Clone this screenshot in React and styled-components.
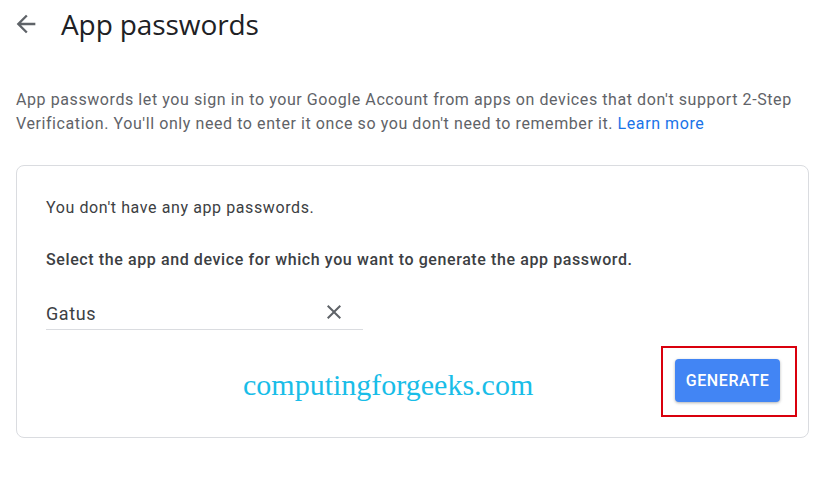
import styled, { createGlobalStyle } from "styled-components";

const GlobalStyle = createGlobalStyle`
    body {
        margin: 0;
        background: #ffffff;
        font-family: Roboto, "Liberation Sans", Arial, sans-serif;
    }
`;

const Page = styled.div`
    width: 830px;
    height: 486px;
    padding: 0 21px 0 16px;
    box-sizing: border-box;
    overflow: hidden;
`;

const Header = styled.div`
    display: flex;
    align-items: center;
    height: 48px;
    margin-left: -4px;
`;

const BackButton = styled.button`
    display: flex;
    align-items: center;
    justify-content: center;
    width: 28px;
    height: 28px;
    padding: 0;
    border: none;
    background: none;
    color: #5f6368;
    margin-right: 21px;
    margin-top: -1px;
`;

const Title = styled.h1`
    margin: 0;
    font-family: "Open Sans", Roboto, sans-serif;
    font-size: 28px;
    font-weight: 400;
    color: #202124;
    letter-spacing: -0.1px;
`;

const Description = styled.p`
    margin: 40px 0 29px;
    font-size: 16px;
    line-height: 24px;
    letter-spacing: 0.58px;
    color: #5f6368;
`;

const Link = styled.a`
    color: #1a73e8;
    text-decoration: none;
`;

const Card = styled.section`
    border: 1px solid #dadce0;
    border-radius: 8px;
    height: 273px;
    box-sizing: border-box;
    padding: 30px 29px 0;
`;

const Text = styled.p`
    margin: 0 0 ${(p) => p.$gap}px;
    font-size: 16px;
    line-height: 24px;
    letter-spacing: 0.6px;
    color: #3c4043;
    font-weight: ${(p) => (p.$bold ? 500 : 400)};
`;

const Field = styled.div`
    display: flex;
    align-items: center;
    justify-content: space-between;
    width: 317px;
    height: 34px;
    border-bottom: 1px solid #dadce0;
`;

const FieldValue = styled.span`
    font-size: 18px;
    letter-spacing: 0.6px;
    color: #3c4043;
    padding-top: 3px;
`;

const ClearIcon = styled.svg`
    width: 24px;
    height: 24px;
    margin-right: 17px;
    fill: #5f6368;
`;

const Footer = styled.div`
    display: flex;
    align-items: center;
    margin-top: 16px;
`;

const Watermark = styled.span`
    flex: 1;
    padding-left: 197px;
    font-family: "Liberation Serif", "Times New Roman", serif;
    font-size: 30px;
    color: #19bde8;
    margin-top: 6px;
`;

const Highlight = styled.div`
    border: 2px solid #d9000d;
    padding: 11px 15px 13px 12px;
    margin-right: -18px;
`;

const Button = styled.button`
    height: 43px;
    width: 105px;
    padding: 0;
    border: none;
    border-radius: 4px;
    background: #4285f4;
    color: #ffffff;
    font-family: Roboto, sans-serif;
    font-size: 16px;
    font-weight: 500;
    letter-spacing: 0.6px;
    box-shadow: 0 1px 3px rgba(60, 64, 67, 0.4);
`;

export default function App() {
    return (
        <Page>
            <GlobalStyle />
            <Header>
                <BackButton>
                    <svg width="28" height="28" viewBox="0 0 24 24" fill="currentColor">
                        <path d="M20 11H7.83l5.59-5.59L12 4l-8 8 8 8 1.41-1.41L7.83 13H20v-2z" />
                    </svg>
                </BackButton>
                <Title>App passwords</Title>
            </Header>
            <Description>
                App passwords let you sign in to your Google Account from apps on devices that
                don't support 2-Step Verification. You'll only need to enter it once so you
                don't need to remember it. <Link href="#">Learn more</Link>
            </Description>
            <Card>
                <Text $gap={28}>You don't have any app passwords.</Text>
                <Text $bold $gap={23}>
                    Select the app and device for which you want to generate the app password.
                </Text>
                <Field>
                    <FieldValue>Gatus</FieldValue>
                    <ClearIcon viewBox="0 0 24 24">
                        <path d="M19 6.41L17.59 5 12 10.59 6.41 5 5 6.41 10.59 12 5 17.59 6.41 19 12 13.41 17.59 19 19 17.59 13.41 12z" />
                    </ClearIcon>
                </Field>
                <Footer>
                    <Watermark>computingforgeeks.com</Watermark>
                    <Highlight>
                        <Button>GENERATE</Button>
                    </Highlight>
                </Footer>
            </Card>
        </Page>
    );
}
